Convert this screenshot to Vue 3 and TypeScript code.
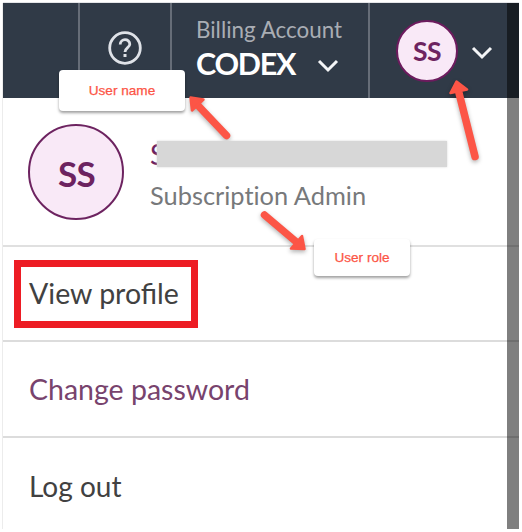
<script setup lang="ts">
interface MenuItem {
  label: string
  tone: string
}

interface Arrow {
  shaft: string
  head: string
}

const menu: MenuItem[] = [
  { label: 'View profile', tone: 'boxed' },
  { label: 'Change password', tone: 'accent' },
  { label: 'Log out', tone: 'plain' },
]

const arrows: Arrow[] = [
  { shaft: 'M226.500 135.500L198 105.500', head: 'M190.500 97.500L203.500 99.500L192 110.500Z' },
  { shaft: 'M475 156.500L459 93', head: 'M456.500 81.500L467 89.500L450.500 93Z' },
  { shaft: 'M264.500 215L297 242.500', head: 'M304.500 249L291 248.500L302 236Z' },
]
</script>

<template>
  <div class="page">
    <div class="panel">
      <header class="topbar">
        <div class="cell spacer"></div>
        <div class="cell help">
          <svg width="36" height="36" viewBox="0 0 36 36" fill="none">
            <circle cx="18" cy="18" r="15.300" stroke="#dfe2e8" stroke-width="2.800" />
            <path d="M13.200 14.600C13.200 8 22.800 8.300 22.800 14.200C22.800 17.600 18 17.700 18 22" stroke="#dfe2e8" stroke-width="2.800" />
            <rect x="16.500" y="24" width="3" height="3" fill="#dfe2e8" />
          </svg>
        </div>
        <div class="cell billing">
          <div class="billing-label">Billing Account</div>
          <div class="billing-row">
            <span class="billing-name">CODEX</span>
            <svg class="chevron" width="22" height="16" viewBox="0 0 22 16" fill="none">
              <path d="M2 3L11 12L20 3" stroke="#f4f5f7" stroke-width="3" />
            </svg>
          </div>
        </div>
        <div class="cell user">
          <div class="avatar small">SS</div>
          <svg class="chevron-user" width="22" height="16" viewBox="0 0 22 16" fill="none">
            <path d="M2 3L11 12L20 3" stroke="#f4f5f7" stroke-width="3" />
          </svg>
        </div>
      </header>
      <section class="profile">
        <div class="avatar large">SS</div>
        <div class="identity">
          <div class="name"><span>S</span><div class="redaction"></div></div>
          <div class="role">Subscription Admin</div>
        </div>
      </section>
      <nav class="menu">
        <div v-for="item in menu" :key="item.label" class="item" :class="item.tone">
          <span class="label">{{ item.label }}</span>
        </div>
      </nav>
      <div class="scrollbar"></div>
    </div>
    <svg class="arrows" width="522" height="532" viewBox="0 0 522 532">
      <g v-for="arrow in arrows" :key="arrow.shaft">
        <path :d="arrow.shaft" stroke="#fc5546" stroke-width="7.500" stroke-linecap="round" />
        <path :d="arrow.head" fill="#fc5546" stroke="#fc5546" stroke-width="2.500" stroke-linejoin="round" />
      </g>
    </svg>
    <div class="note user-name">User name</div>
    <div class="note user-role">User role</div>
  </div>
</template>

<style>
body {
  background: #fff;
}
</style>

<style scoped>
.page {
  position: relative;
  box-sizing: border-box;
  width: 522px;
  height: 532px;
  padding: 3px;
  overflow: hidden;
  background: #fff;
  font-family: Lato, sans-serif;
}
.panel {
  position: relative;
  box-sizing: border-box;
  width: 516px;
  height: 526px;
  box-shadow: -1px 0 0 #ececec, 0 -1px 0 #e4e5e8;
}
.topbar {
  display: flex;
  height: 95px;
  background: #303a47;
}
.cell {
  box-sizing: border-box;
  border-right: 2px solid #666d78;
}
.spacer {
  width: 77px;
}
.help {
  display: flex;
  justify-content: center;
  width: 92px;
  padding-top: 27px;
}
.billing {
  width: 198px;
  padding: 14px 0 0 24px;
}
.billing-label {
  color: #a9adb4;
  font-size: 22.4px;
  line-height: 26px;
  white-space: nowrap;
}
.billing-row {
  display: flex;
  align-items: center;
  height: 42px;
}
.billing-name {
  width: 121px;
  color: #fff;
  font-size: 30.5px;
  font-weight: 700;
  letter-spacing: -1.3px;
  line-height: 40px;
  padding-bottom: 2px;
}
.chevron {
  margin-top: 4px;
}
.user {
  display: flex;
  flex: 1;
  align-items: center;
  gap: 13px;
  padding-left: 26px;
  border-right: 0;
}
.chevron-user {
  margin-top: 5px;
}
.avatar {
  display: flex;
  box-sizing: border-box;
  align-items: center;
  justify-content: center;
  border-radius: 50%;
  background: #f9e9f7;
  color: #6d2360;
  font-weight: 700;
}
.small {
  width: 62px;
  height: 62px;
  border: 2px solid #6d1b5e;
  font-size: 26.5px;
  letter-spacing: -0.5px;
}
.large {
  width: 96px;
  height: 96px;
  padding: 2px 0 0 1px;
  border: 2.500px solid #6d2360;
  font-size: 35px;
  letter-spacing: -0.8px;
}
.profile {
  display: flex;
  box-sizing: border-box;
  height: 149px;
  padding: 26px 0 0 25px;
  border-bottom: 2px solid #e0e0e0;
}
.identity {
  padding: 14px 0 0 26px;
}
.name {
  display: flex;
  align-items: center;
  height: 32px;
  color: #6d2360;
  font-size: 28px;
}
.name span {
  width: 16px;
}
.redaction {
  z-index: 1;
  width: 290px;
  height: 26px;
  margin-left: -9px;
  background: #d7d7d7;
  box-shadow: 0 0 2px #d7d7d7;
}
.role {
  margin-top: 9px;
  color: #77797b;
  font-size: 25.4px;
  line-height: 32px;
  white-space: nowrap;
  font-variant-ligatures: none;
}
.item {
  display: flex;
  box-sizing: border-box;
  align-items: center;
  height: 96px;
  padding-left: 26px;
  border-bottom: 2px solid #dcdcdc;
  color: #414141;
  font-size: 28.5px;
}
.item .label {
  padding-bottom: 1px;
}
.item.plain {
  border-bottom: 0;
  font-size: 28px;
}
.item.accent {
  color: #78436d;
}
.item.boxed {
  height: 95px;
  padding-left: 11px;
}
.item.boxed .label {
  display: flex;
  box-sizing: border-box;
  align-items: center;
  width: 184px;
  height: 68px;
  padding: 0 0 2px 8px;
  border: 7px solid #ed1c24;
  white-space: nowrap;
}
.scrollbar {
  position: absolute;
  top: 0;
  right: 0;
  width: 12px;
  height: 526px;
  background: rgba(0, 0, 0, 0.5);
}
.arrows {
  position: absolute;
  top: 0;
  left: 0;
  filter: drop-shadow(0 2px 2px rgba(0, 0, 0, 0.3));
}
.note {
  position: absolute;
  display: flex;
  align-items: center;
  justify-content: center;
  border-radius: 4px;
  background: #fff;
  box-shadow: 0 2px 3px rgba(0, 0, 0, 0.38);
  color: #fc5546;
  font-family: "Liberation Sans", Arial, sans-serif;
  font-size: 13.6px;
  -webkit-text-stroke: 0.25px #fc5546;
}
.user-name {
  top: 70px;
  left: 59px;
  width: 126px;
  height: 41px;
}
.user-role {
  top: 239px;
  left: 314px;
  width: 96px;
  height: 37px;
}
</style>
